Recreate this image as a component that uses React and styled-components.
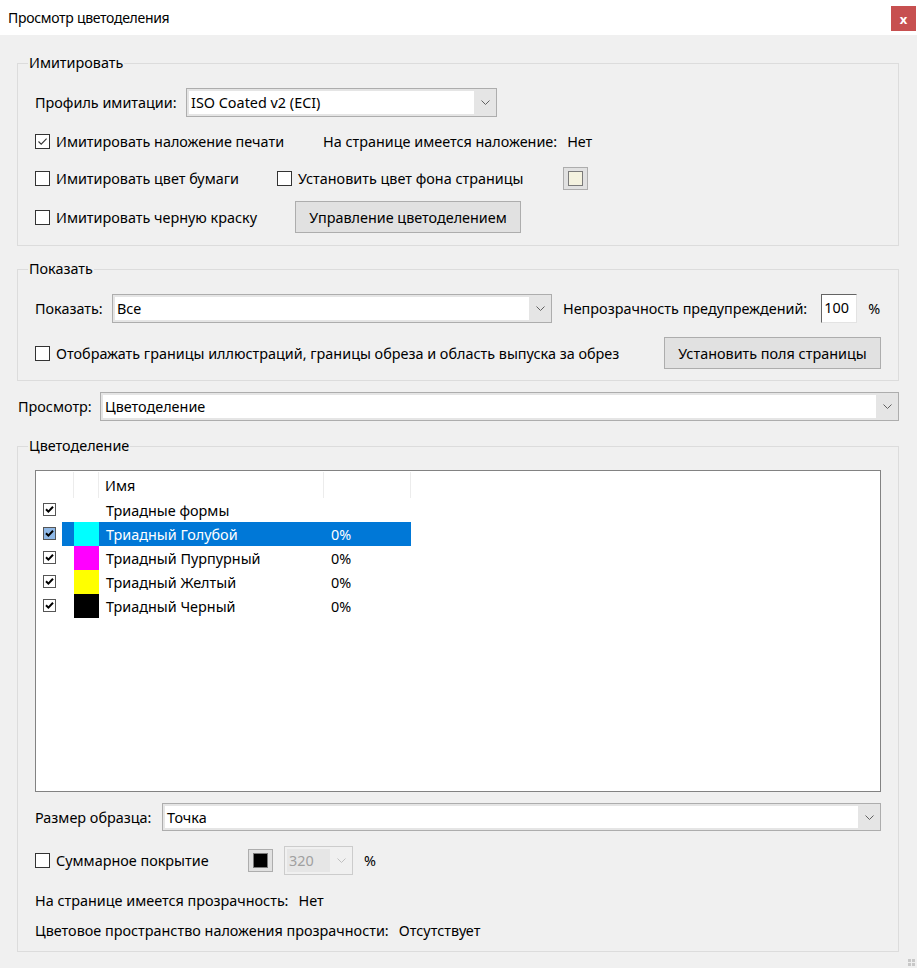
import styled, { createGlobalStyle } from 'styled-components';

const Global = createGlobalStyle`
  html, body { margin: 0; padding: 0; background: #f0f0f0; }
  body {
    font-family: "Noto Sans", "Open Sans", sans-serif;
    font-size: 14.4px;
    color: #000;
  }
`;

const Window = styled.div`
  width: 917px;
  height: 968px;
  background: #f0f0f0;
  display: flex;
  flex-direction: column;
  position: relative;
  overflow: hidden;
`;

const TitleBar = styled.div`
  height: 35px;
  background: #fff;
  display: flex;
  align-items: center;
  justify-content: space-between;
  padding: 0 1px 0 8px;
  box-sizing: border-box;
`;

const Title = styled.span`
  font-size: 14px;
  letter-spacing: -0.3px;
`;

const Close = styled.div`
  width: 25px;
  height: 25px;
  background: #c75050;
  color: #fff;
  font-size: 13px;
  font-weight: bold;
  display: flex;
  align-items: center;
  justify-content: center;
  margin-top: 2px;
`;

const Body = styled.div`
  display: flex;
  flex-direction: column;
  padding: 0 18px 0 17px;
`;

const Group = styled.fieldset`
  margin: ${p => p.$mt}px 0 0 0;
  border: 1px solid #dcdcdc;
  padding: ${p => p.$pt}px 17px ${p => p.$pb}px 17px;
  min-width: 0;
  display: flex;
  flex-direction: column;
`;

const Legend = styled.legend`
  padding: 0 1px;
  margin-left: -7px;
  height: 20px;
  line-height: 20px;
`;

const Row = styled.div`
  display: flex;
  align-items: center;
  height: ${p => p.$h || 20}px;
  margin-top: ${p => p.$mt || 0}px;
`;

const Cell = styled.div`
  display: flex;
  align-items: center;
  width: ${p => p.$w}px;
  flex: none;
`;

const Label = styled.span`
  white-space: nowrap;
  margin-right: ${p => p.$mr || 0}px;
`;

const Box = styled.span`
  width: 13px;
  height: 13px;
  border: 1px solid #333;
  background: #fff;
  flex: none;
  margin-right: 6px;
  display: flex;
  align-items: center;
  justify-content: center;
`;

const Check = ({ on }) => (
  <Box>
    {on && (
      <svg width="11" height="11" viewBox="0 0 11 11">
        <path d="M1.5 5.5 L4.2 8.2 L9.6 2.6" fill="none" stroke="#333" strokeWidth="1.1" />
      </svg>
    )}
  </Box>
);

const Combo = styled.div`
  display: flex;
  height: ${p => p.$h || 29}px;
  width: ${p => (p.$w ? `${p.$w}px` : 'auto')};
  flex: ${p => (p.$w ? 'none' : '1')};
  box-sizing: border-box;
  border: 1px solid #adadad;
  background: #e5e5e5;
  padding: 2px 0 2px 2px;
`;

const ComboField = styled.div`
  flex: 1;
  background: #fff;
  display: flex;
  align-items: center;
  padding-left: 2px;
  white-space: nowrap;
`;

const ComboArrow = styled.div`
  width: 22px;
  display: flex;
  align-items: center;
  justify-content: center;
`;

const Chevron = ({ color = '#606060' }) => (
  <svg width="9" height="5" viewBox="0 0 9 5">
    <path d="M0.5 0.5 L4.5 4.5 L8.5 0.5" fill="none" stroke={color} strokeWidth="1" />
  </svg>
);

const Select = ({ w, h, children }) => (
  <Combo $w={w} $h={h}>
    <ComboField>{children}</ComboField>
    <ComboArrow>
      <Chevron />
    </ComboArrow>
  </Combo>
);

const Button = styled.div`
  height: 32px;
  box-sizing: border-box;
  width: ${p => p.$w}px;
  border: 1px solid #adadad;
  background: #e1e1e1;
  display: flex;
  align-items: center;
  justify-content: center;
  white-space: nowrap;
  margin-left: ${p => p.$ml || 0}px;
`;

const Swatch = styled.div`
  width: 25px;
  height: 23px;
  box-sizing: border-box;
  border: 1px solid #adadad;
  background: #e1e1e1;
  display: flex;
  align-items: center;
  justify-content: center;
  flex: none;
`;

const SwatchFill = styled.div`
  width: 15px;
  height: 15px;
  box-sizing: border-box;
  border: 1px solid #7a7a7a;
  background: ${p => p.$c};
`;

const NumInput = styled.div`
  width: 36px;
  height: 29px;
  box-sizing: border-box;
  background: #fff;
  border: 1px solid #e3e3e3;
  border-top-color: #646464;
  border-left-color: #646464;
  padding: 0 2px;
  display: flex;
  align-items: flex-start;
  padding-top: 3px;
  flex: none;
`;

const ListBox = styled.div`
  height: 322px;
  box-sizing: border-box;
  border: 1px solid #828282;
  background: #fff;
  padding: 1px 0 0 1px;
`;

const HeaderRow = styled.div`
  display: flex;
  height: 26px;
`;

const HeadCell = styled.div`
  width: ${p => p.$w}px;
  flex: none;
  box-sizing: border-box;
  border-right: 1px solid #ececec;
  padding-left: 6px;
  display: flex;
  align-items: center;
`;

const ItemRow = styled.div`
  display: flex;
  height: 24px;
`;

const CheckCell = styled.div`
  width: 25px;
  flex: none;
  display: flex;
  align-items: center;
  padding-left: 6px;
  box-sizing: border-box;
  padding-bottom: 2px;
`;

const ListBoxCheck = styled.span`
  width: 11px;
  height: 11px;
  border: 1px solid #555;
  background: ${p => (p.$sel ? '#8fb8e6' : '#fff')};
  display: flex;
  align-items: center;
  justify-content: center;
`;

const ItemBody = styled.div`
  display: flex;
  width: 349px;
  background: ${p => (p.$sel ? '#0078d7' : 'transparent')};
  color: ${p => (p.$sel ? '#fff' : '#000')};
`;

const Gap = styled.div`
  width: 12px;
  flex: none;
`;

const Chip = styled.div`
  width: 25px;
  flex: none;
  background: ${p => p.$c || 'transparent'};
`;

const ItemText = styled.div`
  width: ${p => p.$w}px;
  flex: none;
  box-sizing: border-box;
  padding-left: 7px;
  display: flex;
  align-items: center;
  white-space: nowrap;
`;

const Disabled = styled.div`
  width: 69px;
  height: 29px;
  box-sizing: border-box;
  border: 1px solid #cccccc;
  background: #f0f0f0;
  display: flex;
  padding: 2px 0 2px 2px;
  margin-left: 11px;
  color: #a0a0a0;
`;

const DisabledField = styled.div`
  flex: 1;
  background: #e6e6e6;
  display: flex;
  align-items: center;
  padding-left: 2px;
`;

const Grip = styled.div`
  position: absolute;
  right: 2px;
  bottom: 2px;
  display: grid;
  grid-template-columns: 3px 3px;
  gap: 1px;
`;

const Dot = styled.span`
  width: 3px;
  height: 3px;
  background: #c8c8c8;
`;

const items = [
  { name: 'Триадные формы', color: null, pct: '' },
  { name: 'Триадный Голубой', color: '#00ffff', pct: '0%', sel: true },
  { name: 'Триадный Пурпурный', color: '#ff00ff', pct: '0%' },
  { name: 'Триадный Желтый', color: '#ffff00', pct: '0%' },
  { name: 'Триадный Черный', color: '#000000', pct: '0%' },
];

const ListCheck = ({ sel }) => (
  <ListBoxCheck $sel={sel}>
    <svg width="9" height="9" viewBox="0 0 9 9">
      <path d="M1 4.2 L3.4 6.6 L8 1.8" fill="none" stroke="#000" strokeWidth="2" />
    </svg>
  </ListBoxCheck>
);

export default function App() {
  return (
    <Window>
      <Global />
      <TitleBar>
        <Title>Просмотр цветоделения</Title>
        <Close>x</Close>
      </TitleBar>
      <Body>
        <Group $mt={18} $pt={15} $pb={12}>
          <Legend>Имитировать</Legend>
          <Row $h={29}>
            <Cell $w={151}>
              <Label>Профиль имитации:</Label>
            </Cell>
            <Select w={311}>ISO Coated v2 (ECI)</Select>
          </Row>
          <Row $mt={14}>
            <Cell $w={288}>
              <Check on />
              <Label>Имитировать наложение печати</Label>
            </Cell>
            <Label $mr={10}>На странице имеется наложение:</Label>
            <Label>Нет</Label>
          </Row>
          <Row $h={24} $mt={15}>
            <Cell $w={242}>
              <Check />
              <Label>Имитировать цвет бумаги</Label>
            </Cell>
            <Cell $w={286}>
              <Check />
              <Label>Установить цвет фона страницы</Label>
            </Cell>
            <Swatch>
              <SwatchFill $c="#f4f2df" />
            </Swatch>
          </Row>
          <Row $h={32} $mt={11}>
            <Cell $w={260}>
              <Check />
              <Label>Имитировать черную краску</Label>
            </Cell>
            <Button $w={226}>Управление цветоделением</Button>
          </Row>
        </Group>

        <Group $mt={13} $pt={15} $pb={11}>
          <Legend>Показать</Legend>
          <Row $h={29}>
            <Cell $w={77}>
              <Label>Показать:</Label>
            </Cell>
            <Select w={440}>Все</Select>
            <Label $mr={14} style={{ marginLeft: 11 }}>
              Непрозрачность предупреждений:
            </Label>
            <NumInput>100</NumInput>
            <Label style={{ marginLeft: 11 }}>%</Label>
          </Row>
          <Row $h={32} $mt={14}>
            <Check />
            <Label>Отображать границы иллюстраций, границы обреза и область выпуска за обрез</Label>
            <Button $w={217} style={{ marginLeft: 'auto' }}>
              Установить поля страницы
            </Button>
          </Row>
        </Group>

        <Row $h={29} $mt={11}>
          <Cell $w={83}>
            <Label style={{ marginLeft: 1 }}>Просмотр:</Label>
          </Cell>
          <Select>Цветоделение</Select>
        </Row>

        <Group $mt={15} $pt={14} $pb={11}>
          <Legend>Цветоделение</Legend>
          <ListBox>
            <HeaderRow>
              <HeadCell $w={37} />
              <HeadCell $w={25} />
              <HeadCell $w={225}>Имя</HeadCell>
              <HeadCell $w={87} />
            </HeaderRow>
            {items.map(it => (
              <ItemRow key={it.name}>
                <CheckCell>
                  <ListCheck sel={it.sel} />
                </CheckCell>
                <ItemBody $sel={it.sel}>
                  <Gap />
                  <Chip $c={it.color} />
                  <ItemText $w={225}>{it.name}</ItemText>
                  <ItemText $w={87}>{it.pct}</ItemText>
                </ItemBody>
              </ItemRow>
            ))}
          </ListBox>
          <Row $h={28} $mt={11}>
            <Cell $w={127}>
              <Label>Размер образца:</Label>
            </Cell>
            <Select h={28}>Точка</Select>
          </Row>
          <Row $h={29} $mt={15}>
            <Cell $w={213}>
              <Check />
              <Label>Суммарное покрытие</Label>
            </Cell>
            <Swatch>
              <SwatchFill $c="#000" />
            </Swatch>
            <Disabled>
              <DisabledField>320</DisabledField>
              <ComboArrow>
                <Chevron color="#c0c0c0" />
              </ComboArrow>
            </Disabled>
            <Label style={{ marginLeft: 11 }}>%</Label>
          </Row>
          <Row $mt={15}>
            <Label $mr={10}>На странице имеется прозрачность:</Label>
            <Label>Нет</Label>
          </Row>
          <Row $mt={10}>
            <Label $mr={10}>Цветовое пространство наложения прозрачности:</Label>
            <Label>Отсутствует</Label>
          </Row>
        </Group>
      </Body>
      <Grip>
        <Dot />
        <Dot />
        <Dot />
        <Dot />
      </Grip>
    </Window>
  );
}
